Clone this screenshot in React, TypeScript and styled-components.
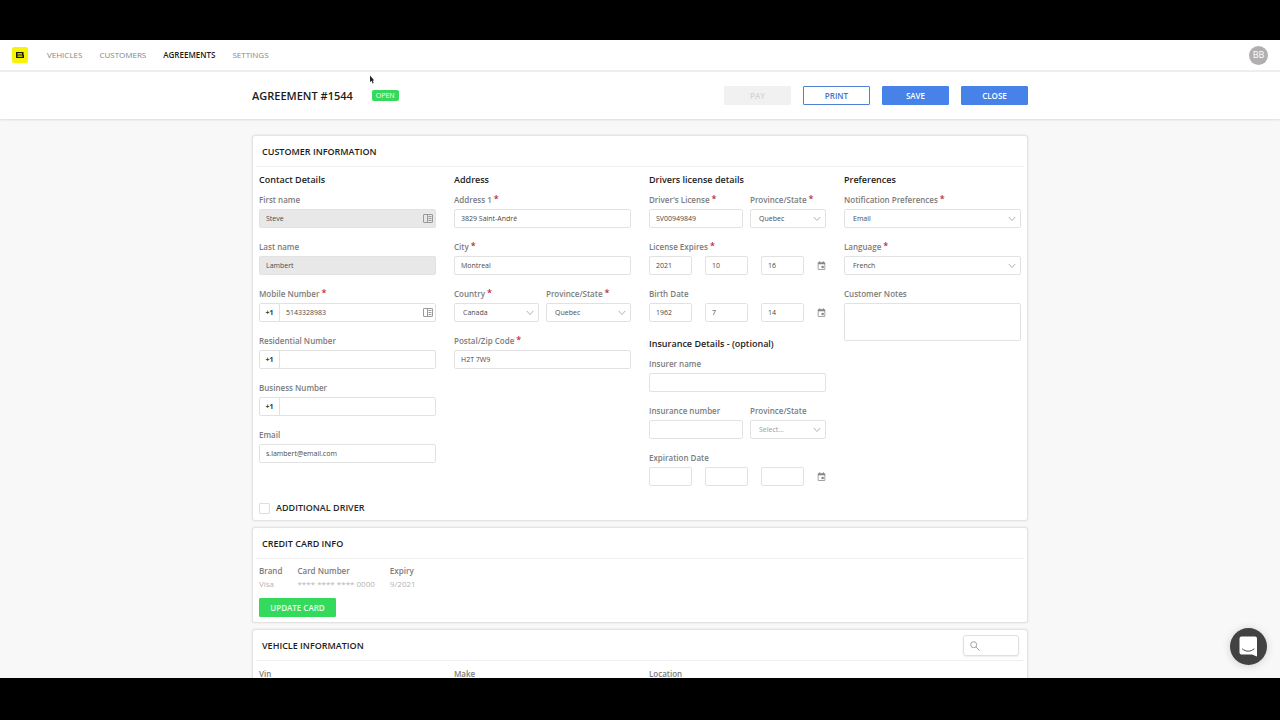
import React, { useId } from "react";
import styled, { createGlobalStyle, css } from "styled-components";

const GlobalStyle = createGlobalStyle`
  * { box-sizing: border-box; }
  body {
    margin: 0;
    background: #000;
    color: #222;
    font-family: "Open Sans", "Noto Sans", sans-serif;
    font-size: 8px;
    line-height: 14px;
  }
  input, select, textarea, button { font: inherit; color: inherit; margin: 0; }
`;

const Frame = styled.div`
  height: 100vh;
  padding: 40px 0 42px;
  background: #000;
`;

const Screen = styled.div`
  position: relative;
  height: 100%;
  overflow: hidden;
  background: #f8f8f8;
`;

const NavBar = styled.nav`
  display: flex;
  align-items: center;
  height: 32px;
  padding: 0 12px;
  background: #fff;
  border-bottom: 2px solid #efefef;
`;

const Logo = styled.svg`
  width: 16px;
  height: 16px;
  margin-right: 19px;
`;

const NavLinks = styled.div`
  display: flex;
  flex: 1;
  gap: 17px;
`;

const NavLink = styled.a<{ $active?: boolean }>`
  text-decoration: none;
  color: ${(p) => (p.$active ? "#1c1c1c" : "#858585")};
  font-weight: ${(p) => (p.$active ? 600 : 400)};
`;

const Avatar = styled.button`
  width: 19px;
  height: 19px;
  padding: 0;
  border: 0;
  border-radius: 50%;
  background: #b0b0b0;
  color: #fff;
  font-size: 9px;
`;

const TitleBar = styled.header`
  background: #fff;
  box-shadow: 0 1px 2px rgba(0, 0, 0, 0.12);
`;

const Container = styled.div`
  width: 100%;
  max-width: 776px;
  margin: 0 auto;
`;

const TitleRow = styled(Container)`
  display: flex;
  align-items: center;
  height: 47px;
`;

const Title = styled.h1`
  margin: 0 19px 0 0;
  font-size: 11px;
  font-weight: 600;
  color: #1c1c1c;
`;

const Badge = styled.span`
  padding: 0 4px;
  border-radius: 2px;
  background: #34da5c;
  color: #fff;
  font-size: 7px;
  line-height: 11px;
`;

const Actions = styled.div`
  display: flex;
  gap: 12px;
  margin-left: auto;
`;

const buttonKinds = {
  primary: css`
    background: #4682e8;
    border-color: #4682e8;
    color: #fff;
  `,
  outline: css`
    background: #fff;
    border-color: #4f7fd3;
    color: #4473cc;
  `,
  disabled: css`
    background: #f1f1f1;
    border-color: #f1f1f1;
    color: #d4d4d4;
  `,
  success: css`
    background: #34da5c;
    border-color: #34da5c;
    color: #e6ffec;
  `,
};

const Button = styled.button<{ $kind: keyof typeof buttonKinds; $wide?: boolean }>`
  display: block;
  width: ${(p) => (p.$wide ? 77 : 67)}px;
  height: 19px;
  padding: 0;
  border: 1px solid;
  border-radius: 1px;
  font-weight: 600;
  line-height: 14px;
  ${(p) => buttonKinds[p.$kind]}
`;

const Cards = styled(Container)`
  display: flex;
  flex-direction: column;
  gap: 6px;
  padding-top: 16px;
`;

const Card = styled.section`
  background: #fff;
  border: 1px solid #e4e4e4;
  border-radius: 3px;
  box-shadow: 0 0 2px rgba(0, 0, 0, 0.12);
`;

const CardHead = styled.div`
  display: flex;
  align-items: center;
  justify-content: space-between;
  height: 31px;
  margin: 0 3px;
  padding: 1px 5px 0 6px;
  border-bottom: 1px solid #f0f0f0;
`;

const CardTitle = styled.h2`
  margin: 0;
  font-size: 9px;
  font-weight: 600;
  color: #1c1c1c;
`;

const CardBody = styled.div<{ $tight?: boolean }>`
  padding: ${(p) => (p.$tight ? 5 : 6)}px 6px 5px;
`;

const Columns = styled.div`
  display: grid;
  grid-template-columns: repeat(4, 1fr);
  column-gap: 18px;
`;

const ColumnTitle = styled.h3<{ $spaced?: boolean }>`
  margin: 0 0 6px;
  padding-top: ${(p) => (p.$spaced ? 3 : 0)}px;
  font-size: 9px;
  font-weight: 600;
  color: #1c1c1c;
`;

const FieldBox = styled.div`
  min-width: 0;
  margin-bottom: 12px;
`;

const labelText = css`
  font-size: 8px;
  font-weight: 600;
  color: #7c7c7c;
`;

const Label = styled.label`
  display: flex;
  gap: 2px;
  height: 14px;
  margin-bottom: 2px;
  white-space: nowrap;
  ${labelText}
`;

const Star = styled.span`
  color: #c0283c;
  font-size: 9px;
  line-height: 12px;
`;

const Control = styled.div<{ $filled?: boolean }>`
  position: relative;
  display: flex;
  align-items: center;
  height: 19px;
  border: 1px solid #e2e2e2;
  border-radius: 2px;
  background: ${(p) => (p.$filled ? "#e8e8e8" : "#fff")};
`;

const controlText = css`
  width: 100%;
  min-width: 0;
  height: 100%;
  border: 0;
  outline: 0;
  background: transparent;
  color: #4a4a4a;
  font-size: 7px;
`;

const TextInput = styled.input`
  ${controlText}
  padding: 0 6px;
`;

const SelectInput = styled.select<{ $empty?: boolean }>`
  ${controlText}
  appearance: none;
  padding: 0 16px 0 8px;
  color: ${(p) => (p.$empty ? "#9a9a9a" : "#4a4a4a")};
`;

const Chevron = styled.svg`
  position: absolute;
  right: 4px;
  top: 6px;
  width: 8px;
  height: 6px;
  pointer-events: none;
`;

const ContactIcon = styled.svg`
  flex: none;
  width: 10px;
  height: 9px;
  margin-right: 2px;
`;

const Prefix = styled.span`
  flex: none;
  width: 20px;
  height: 100%;
  border-right: 1px solid #e2e2e2;
  color: #333;
  font-size: 7px;
  font-weight: 700;
  line-height: 17px;
  text-align: center;
`;

const Notes = styled.textarea`
  display: block;
  width: 100%;
  height: 38px;
  padding: 4px 6px;
  border: 1px solid #e2e2e2;
  border-radius: 2px;
  resize: none;
  font-size: 7px;
`;

const Split = styled.div<{ $columns: string }>`
  display: grid;
  grid-template-columns: ${(p) => p.$columns};
  column-gap: 7px;
`;

const DateGroup = styled.fieldset`
  min-width: 0;
  margin: 0 0 12px;
  padding: 0;
  border: 0;
`;

const Legend = styled.legend`
  display: flex;
  gap: 2px;
  height: 14px;
  margin-bottom: 2px;
  padding: 0;
  ${labelText}
`;

const DateRow = styled.div`
  display: grid;
  grid-template-columns: repeat(3, 1fr) 9px;
  column-gap: 13px;
  align-items: center;
`;

const IconButton = styled.button`
  display: flex;
  padding: 0;
  border: 0;
  background: none;
`;

const CheckRow = styled.label`
  display: flex;
  align-items: center;
  gap: 6px;
  margin-top: 3px;
  color: #2a2a2a;
  font-size: 9px;
  font-weight: 600;
`;

const Checkbox = styled.input`
  appearance: none;
  width: 11px;
  height: 11px;
  border: 1px solid #dedede;
  border-radius: 1px;
  background: #fff;
  &:checked { background: #4682e8; }
`;

const CardTable = styled.table`
  border-collapse: collapse;
  margin-bottom: 8px;
  th, td {
    padding: 0 15px 0 0;
    text-align: left;
    line-height: 13px;
  }
  th { ${labelText} }
  td { color: #b4b4b4; }
`;

const SearchBox = styled.label`
  display: flex;
  align-items: center;
  width: 56px;
  height: 21px;
  padding-left: 6px;
  border: 1px solid #e0e0e0;
  border-radius: 3px;
  box-shadow: 0 1px 2px rgba(0, 0, 0, 0.08);
  svg { flex: none; }
`;

const ChatButton = styled.button`
  position: absolute;
  right: 13px;
  bottom: 13px;
  display: grid;
  place-items: center;
  width: 37px;
  height: 37px;
  padding: 0;
  border: 0;
  border-radius: 50%;
  background: #424242;
  box-shadow: 0 1px 8px rgba(0, 0, 0, 0.16);
`;

const Pointer = styled.svg`
  position: absolute;
  left: 369px;
  top: 35px;
  width: 6px;
  height: 9px;
`;

function Required() {
  return <Star aria-hidden="true">*</Star>;
}

function AutofillIcon() {
  return (
    <ContactIcon viewBox="0 0 10 9" aria-hidden="true">
      <rect x="0.5" y="0.5" width="9" height="8" rx="0.5" fill="none" stroke="#999" />
      <path d="M4.500 0.500v8" stroke="#999" />
      <path d="M5.500 2.500h3M5.500 4.500h3M5.500 6.500h3" stroke="#999" />
    </ContactIcon>
  );
}

function CalendarIcon() {
  return (
    <svg width="9" height="9" viewBox="0 0 24 24" fill="#858585" aria-hidden="true">
      <path d="M20 3h-2V0.500h-2.600V3H8.600V0.500H6V3H4C2.700 3 2 3.900 2 5v16c0 1.100.9 2 2 2h16c1.100 0 2-.9 2-2V5c0-1.100-.9-2-2-2zm0 18H4V8.500h16V21z" />
      <path d="M12 13h6v6h-6z" />
    </svg>
  );
}

type TextFieldProps = {
  label: string;
  value?: string;
  required?: boolean;
  readOnly?: boolean;
  prefix?: string;
  autofill?: boolean;
};

function TextField({ label, value = "", required, readOnly, prefix, autofill }: TextFieldProps) {
  const id = useId();
  return (
    <FieldBox>
      <Label htmlFor={id}>
        {label}
        {required && <Required />}
      </Label>
      <Control $filled={readOnly}>
        {prefix && <Prefix>{prefix}</Prefix>}
        <TextInput id={id} defaultValue={value} readOnly={readOnly} />
        {autofill && <AutofillIcon />}
      </Control>
    </FieldBox>
  );
}

type SelectFieldProps = { label: string; value: string; required?: boolean; empty?: boolean };

function SelectField({ label, value, required, empty }: SelectFieldProps) {
  const id = useId();
  return (
    <FieldBox>
      <Label htmlFor={id}>
        {label}
        {required && <Required />}
      </Label>
      <Control>
        <SelectInput id={id} $empty={empty} defaultValue={value}>
          <option>{value}</option>
        </SelectInput>
        <Chevron viewBox="0 0 8 6" aria-hidden="true">
          <path d="M0.800 1L4 4.500L7.200 1" fill="none" stroke="#b0b0b0" />
        </Chevron>
      </Control>
    </FieldBox>
  );
}

type DateFieldProps = { label: string; values?: string[]; required?: boolean };

function DateField({ label, values = ["", "", ""], required }: DateFieldProps) {
  const parts = ["year", "month", "day"];
  return (
    <DateGroup>
      <Legend>
        {label}
        {required && <Required />}
      </Legend>
      <DateRow>
        {parts.map((part, i) => (
          <Control key={part}>
            <TextInput aria-label={`${label} ${part}`} defaultValue={values[i]} />
          </Control>
        ))}
        <IconButton type="button" aria-label={`Pick ${label}`}>
          <CalendarIcon />
        </IconButton>
      </DateRow>
    </DateGroup>
  );
}

function NotesField() {
  const id = useId();
  return (
    <FieldBox>
      <Label htmlFor={id}>Customer Notes</Label>
      <Notes id={id} />
    </FieldBox>
  );
}

export default function App() {
  return (
    <Frame>
      <GlobalStyle />
      <Screen>
        <NavBar>
          <Logo viewBox="0 0 16 16" aria-hidden="true">
            <rect width="16" height="16" rx="2" fill="#f7f40a" />
            <path d="M4 5h7.500v2.500l0.500 0.500v3H4zM5.500 6.300v1.200h4.500V6.300zM5.500 8.600v1.200h5V8.600z" fill="#1a1a00" fillRule="evenodd" />
          </Logo>
          <NavLinks>
            <NavLink href="#vehicles">VEHICLES</NavLink>
            <NavLink href="#customers">CUSTOMERS</NavLink>
            <NavLink href="#agreements" $active>AGREEMENTS</NavLink>
            <NavLink href="#settings">SETTINGS</NavLink>
          </NavLinks>
          <Avatar type="button">BB</Avatar>
        </NavBar>

        <TitleBar>
          <TitleRow>
            <Title>AGREEMENT #1544</Title>
            <Badge>OPEN</Badge>
            <Actions>
              <Button type="button" $kind="disabled" disabled>PAY</Button>
              <Button type="button" $kind="outline">PRINT</Button>
              <Button type="button" $kind="primary">SAVE</Button>
              <Button type="button" $kind="primary">CLOSE</Button>
            </Actions>
          </TitleRow>
        </TitleBar>

        <Cards as="main">
          <Card>
            <CardHead>
              <CardTitle>CUSTOMER INFORMATION</CardTitle>
            </CardHead>
            <CardBody>
              <Columns>
                <div>
                  <ColumnTitle>Contact Details</ColumnTitle>
                  <TextField label="First name" value="Steve" readOnly autofill />
                  <TextField label="Last name" value="Lambert" readOnly />
                  <TextField label="Mobile Number" value="5143328983" prefix="+1" required autofill />
                  <TextField label="Residential Number" prefix="+1" />
                  <TextField label="Business Number" prefix="+1" />
                  <TextField label="Email" value="s.lambert@email.com" />
                </div>
                <div>
                  <ColumnTitle>Address</ColumnTitle>
                  <TextField label="Address 1" value="3829 Saint-André" required />
                  <TextField label="City" value="Montreal" required />
                  <Split $columns="1fr 1fr">
                    <SelectField label="Country" value="Canada" required />
                    <SelectField label="Province/State" value="Quebec" required />
                  </Split>
                  <TextField label="Postal/Zip Code" value="H2T 7W9" required />
                </div>
                <div>
                  <ColumnTitle>Drivers license details</ColumnTitle>
                  <Split $columns="94fr 76fr">
                    <TextField label="Driver's License" value="SV00949849" required />
                    <SelectField label="Province/State" value="Quebec" required />
                  </Split>
                  <DateField label="License Expires" values={["2021", "10", "16"]} required />
                  <DateField label="Birth Date" values={["1962", "7", "14"]} />
                  <ColumnTitle $spaced>Insurance Details - (optional)</ColumnTitle>
                  <TextField label="Insurer name" />
                  <Split $columns="94fr 76fr">
                    <TextField label="Insurance number" />
                    <SelectField label="Province/State" value="Select..." empty />
                  </Split>
                  <DateField label="Expiration Date" />
                </div>
                <div>
                  <ColumnTitle>Preferences</ColumnTitle>
                  <SelectField label="Notification Preferences" value="Email" required />
                  <SelectField label="Language" value="French" required />
                  <NotesField />
                </div>
              </Columns>
              <CheckRow>
                <Checkbox type="checkbox" />
                ADDITIONAL DRIVER
              </CheckRow>
            </CardBody>
          </Card>

          <Card>
            <CardHead>
              <CardTitle>CREDIT CARD INFO</CardTitle>
            </CardHead>
            <CardBody $tight>
              <CardTable>
                <thead>
                  <tr>
                    <th>Brand</th>
                    <th>Card Number</th>
                    <th>Expiry</th>
                  </tr>
                </thead>
                <tbody>
                  <tr>
                    <td>Visa</td>
                    <td>**** **** **** 0000</td>
                    <td>9/2021</td>
                  </tr>
                </tbody>
              </CardTable>
              <Button type="button" $kind="success" $wide>UPDATE CARD</Button>
            </CardBody>
          </Card>

          <Card>
            <CardHead>
              <CardTitle>VEHICLE INFORMATION</CardTitle>
              <SearchBox>
                <svg width="10" height="10" viewBox="0 0 10 10" fill="none" stroke="#a0a0a0" aria-hidden="true">
                  <circle cx="3.700" cy="3.700" r="3" />
                  <path d="M6 6l3.500 3.500" />
                </svg>
                <TextInput aria-label="Search vehicles" />
              </SearchBox>
            </CardHead>
            <CardBody>
              <Columns>
                <TextField label="Vin" />
                <TextField label="Make" />
                <TextField label="Location" />
              </Columns>
            </CardBody>
          </Card>
        </Cards>

        <ChatButton type="button" aria-label="Open chat">
          <svg width="19" height="21" viewBox="0 0 19 21" aria-hidden="true">
            <path d="M2.500 0.500h13.500a2 2 0 0 1 2 2V20.500l-5-2H2.500a2 2 0 0 1-2-2V2.500a2 2 0 0 1 2-2z" fill="#fff" />
            <path d="M3.500 13c3.500 3 8 3 11.500 0" fill="none" stroke="#424242" strokeLinecap="round" />
          </svg>
        </ChatButton>
        <Pointer viewBox="0 0 6 9" aria-hidden="true">
          <path d="M1 0.500v6.500l1.500-1.200L3.700 8.500l1-0.500L3.600 5.400H5.300z" fill="#222" />
        </Pointer>
      </Screen>
    </Frame>
  );
}
